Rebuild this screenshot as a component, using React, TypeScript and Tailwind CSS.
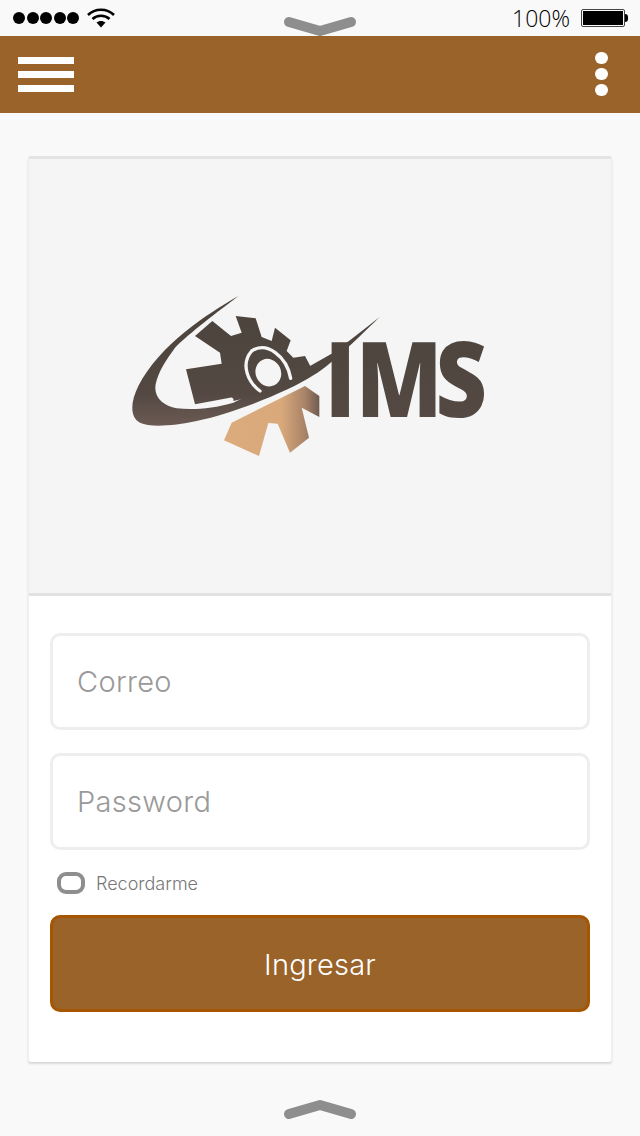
import { useState } from 'react';

const BROWN = 'bg-[#996329]';

function Grabber({ flip }: { flip?: boolean }) {
  return (
    <svg width="76" height="24" viewBox="0 0 76 24" className={flip ? 'block rotate-180' : 'block'}>
      <path d="M7 7 L38 16 L69 7" fill="none" stroke="#8e8e8e" strokeWidth="10" strokeLinecap="round" strokeLinejoin="round" />
    </svg>
  );
}

function StatusBar() {
  return (
    <div className="h-9 flex items-center justify-between pl-[13px] pr-[12px]">
      <div className="flex items-center gap-[1.5px]">
        {[0, 1, 2, 3, 4].map((i) => (
          <span key={i} className="w-[12px] h-[12px] rounded-full bg-black" />
        ))}
        <svg width="30" height="22" viewBox="0 0 30 22" className="ml-[5px] -mt-[1px]">
          <path d="M2 8 C9 1 21 1 28 8" fill="none" stroke="#000" strokeWidth="2.6" />
          <path d="M6.5 12 C11 7.6 19 7.6 23.5 12" fill="none" stroke="#000" strokeWidth="2.6" />
          <path d="M10.5 15.5 L15 20.5 L19.5 15.5 C17 13.4 13 13.4 10.5 15.5 Z" fill="#000" />
        </svg>
      </div>
      <div className="flex items-center gap-[11px]">
        <span className="font-['Open_Sans'] font-light text-[23px] leading-none text-black">100%</span>
        <div className="flex items-center">
          <div className="w-[44px] h-[18px] border border-[#444] p-[1px] rounded-[2px]">
            <div className="w-full h-full bg-black" />
          </div>
          <span className="w-[3px] h-[8px] bg-black rounded-r-full" />
        </div>
      </div>
    </div>
  );
}

function Header() {
  return (
    <div className={`h-[77px] ${BROWN} flex items-center justify-between pl-[18px] pr-[32px]`}>
      <div className="flex flex-col gap-[7px]">
        <span className="block w-[56px] h-[7px] bg-white" />
        <span className="block w-[56px] h-[7px] bg-white" />
        <span className="block w-[56px] h-[7px] bg-white" />
      </div>
      <div className="flex flex-col gap-[4px] -mt-[1px]">
        <span className="block w-[13px] h-[12px] rounded-full bg-white" />
        <span className="block w-[13px] h-[12px] rounded-full bg-white" />
        <span className="block w-[13px] h-[12px] rounded-full bg-white" />
      </div>
    </div>
  );
}

function Logo() {
  return (
    <svg width="380" height="180" viewBox="0 0 1140 540" className="block">
      <defs>
        <linearGradient id="dark" gradientUnits="userSpaceOnUse" x1="0" y1="90" x2="0" y2="420">
          <stop offset="0" stopColor="#4d443e" />
          <stop offset="0.7" stopColor="#534842" />
          <stop offset="1" stopColor="#6c5a54" />
        </linearGradient>
        <linearGradient id="copper" x1="0" y1="0" x2="1" y2="0">
          <stop offset="0" stopColor="#dcab7c" />
          <stop offset="0.6" stopColor="#d9a97b" />
          <stop offset="0.85" stopColor="#a88368" />
          <stop offset="1" stopColor="#6f5b50" />
        </linearGradient>
        <linearGradient id="textDark" x1="0" y1="0" x2="0" y2="1">
          <stop offset="0" stopColor="#4d443e" />
          <stop offset="0.75" stopColor="#534842" />
          <stop offset="1" stopColor="#6c5a54" />
        </linearGradient>
      </defs>
      <path
        d="M225 150 L277 105 L333 150 L365 140 L347 90 L407 97 L425 153 L455 165 L465 125 L512 163 L500 195 L520 215 L555 210 L572 242 L500 310 L340 345 C342 338 338 333 330 335 L225 355 L198 250 L305 233 L300 200 Z"
        fill="url(#dark)"
      />
      <path
        d="M355 30 C260 85 120 175 55 300 C30 350 30 395 60 410 C90 425 160 420 230 405 C330 385 500 320 580 268 C640 232 740 130 780 92 C735 128 680 170 640 200 L570 240 L340 350 C280 368 220 372 170 367 C130 360 100 335 107 295 C115 255 140 220 165 185 C210 140 290 80 355 30 Z"
        fill="url(#dark)"
      />
      <path d="M420 315 C385 290 360 235 395 195 C440 165 500 210 512 277" fill="none" stroke="#f5f5f5" strokeWidth="10" strokeLinecap="round" />
      <ellipse cx="445" cy="260" rx="38" ry="42" fill="#f5f5f5" transform="rotate(-25 445 260)" />
      <path
        d="M335 410 L555 300 L598 330 L598 393 L545 365 L567 455 L510 500 L473 413 L445 411 L417 510 L312 463 Z"
        fill="url(#copper)"
      />
      <text
        x="0 111 391"
        y="0"
        transform="translate(614 394) scale(0.85 1)"
        fontFamily="'Open Sans', sans-serif"
        fontWeight="800"
        fontSize="315"
        fill="url(#textDark)"
      >
        IMS
      </text>
    </svg>
  );
}

function Field({ placeholder, type }: { placeholder: string; type: string }) {
  return (
    <input
      type={type}
      placeholder={placeholder}
      className="w-full h-[97px] bg-white border-[3px] border-[#eeeeee] rounded-[10px] pl-[24px] font-['Inter'] font-light text-[29px] tracking-[0.3px] text-[#999] placeholder:text-[#999] outline-none"
    />
  );
}

export default function App() {
  const [remember, setRemember] = useState(false);

  return (
    <div className="relative min-h-[1136px] bg-[#f9f9f9] overflow-hidden font-['Inter']">
      <StatusBar />
      <Header />

      <div className="absolute top-[15px] left-[282px]">
        <Grabber />
      </div>

      <div className="mx-[28px] mt-[43px] h-[906px] bg-white rounded-[3px] border-x border-[#eeeeee] border-t-[3px] border-t-[#e4e4e4] border-b-0 shadow-[0_2px_2px_#d8d8d8] flex flex-col">
        <div className="h-[437px] bg-[#f5f5f5] border-b-[3px] border-b-[#e2e2e2] flex items-center justify-center">
          <div className="-ml-[20px]">
            <Logo />
          </div>
        </div>

        <div className="px-[21px] pt-[37px] flex flex-col">
          <Field placeholder="Correo" type="email" />
          <div className="h-[23px]" />
          <Field placeholder="Password" type="password" />

          <label className="flex items-center gap-[11px] pl-[7px] mt-[22px] h-[22px]">
            <input
              type="checkbox"
              checked={remember}
              onChange={(e) => setRemember(e.target.checked)}
              className="appearance-none w-[28px] h-[22px] border-[4px] border-[#8e8e8e] rounded-[9px] bg-white"
            />
            <span className="text-[18px] font-light text-[#777] pt-[1px]">Recordarme</span>
          </label>

          <button className={`mt-[21px] w-full h-[97px] ${BROWN} border-[3px] border-[#a65500] rounded-[10px] pt-[3px] text-white font-['Inter'] font-light text-[29px] tracking-[0.2px]`}>
            Ingresar
          </button>
        </div>
      </div>

      <div className="absolute top-[1097px] left-[282px]">
        <Grabber flip />
      </div>
    </div>
  );
}
